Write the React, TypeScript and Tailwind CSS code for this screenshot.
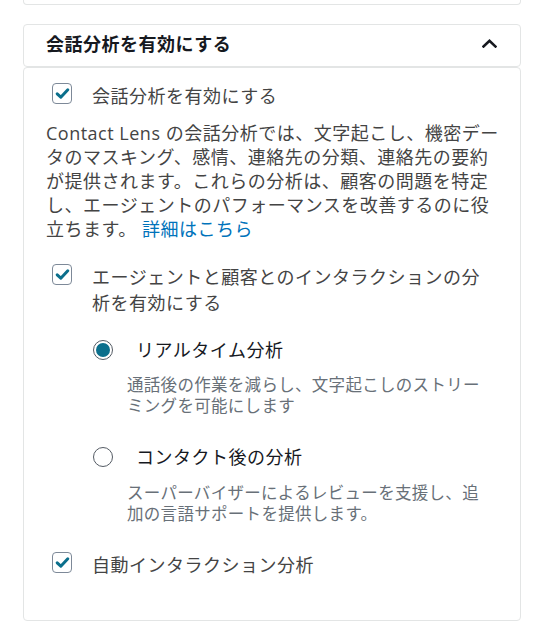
import React from "react";

const FONT = '"Open Sans", "Noto Sans CJK JP", sans-serif';

function Check() {
  return (
    <span className="flex h-[21px] w-[20px] shrink-0 items-center justify-center rounded-[4px] border border-[#7d8998] bg-white">
      <svg width="15" height="15" viewBox="0 0 15 15" fill="none">
        <path d="M2.2 7.8 L5.8 11.2 L12.8 3.8" stroke="#0b6f8c" strokeWidth="3" strokeLinecap="round" strokeLinejoin="round" />
      </svg>
    </span>
  );
}

function Radio({ on }: { on?: boolean }) {
  return (
    <span className="flex h-[20px] w-[20px] shrink-0 items-center justify-center rounded-full border border-[#545b64] bg-white">
      {on && <span className="h-[14px] w-[14px] rounded-full bg-[#0b6f8c]" />}
    </span>
  );
}

export default function App() {
  return (
    <div className="min-h-screen bg-white" style={{ fontFamily: FONT }}>
      <div className="ml-[23px] mr-[19px]">
        <div className="h-[5px] rounded-b-[4px] border-x border-b border-[#e3e5e5]" />
        <div className="mt-[19px] flex h-[43px] items-center justify-between rounded-[4px] border border-[#e3e5e5] pl-[22px] pr-[23px]">
          <span className="mb-[3px] text-[18px] font-bold leading-[26px] tracking-[0.5px] text-[#16191f]">会話分析を有効にする</span>
          <svg width="15" height="9" viewBox="0 0 15 9" fill="none" className="mb-[5px]">
            <path d="M1.5 7.5 L7.5 1.8 L13.5 7.5" stroke="#16191f" strokeWidth="2.6" strokeLinecap="square" />
          </svg>
        </div>
        <div className="rounded-[4px] border border-[#e3e5e5] pb-[42px] pl-[22px] pr-[18px] pt-[15px] text-[18px] tracking-[0.5px]">
          <div className="flex items-start gap-[20px] pl-[6px] pr-[9px]">
            <Check />
            <span className="leading-[26px] text-[#444]">会話分析を有効にする</span>
          </div>
          <p className="mt-[12px] leading-[24px] text-[#444]">
            Contact Lens の会話分析では、文字起こし、機密データのマスキング、感情、連絡先の分類、連絡先の要約が提供されます。これらの分析は、顧客の問題を特定し、エージェントのパフォーマンスを改善するのに役立ちます。 <span className="text-[#0073bb]">詳細はこちら</span>
          </p>
          <div className="pr-[9px]">
            <div className="mt-[23px] flex items-start gap-[20px] pl-[6px]">
              <Check />
              <span className="leading-[26px] text-[#444]">エージェントと顧客とのインタラクションの分析を有効にする</span>
            </div>
            <div className="mt-[21px] flex items-start gap-[23px] pl-[47px]">
              <span className="mt-[3px]"><Radio on /></span>
              <span className="leading-[26px] text-[#16191f]">リアルタイム分析</span>
            </div>
            <p className="ml-[81px] mt-[12px] text-[16.5px] leading-[20.5px] tracking-[0.3px] text-[#687078]">
              通話後の作業を減らし、文字起こしのストリーミングを可能にします
            </p>
            <div className="mt-[28px] flex items-start gap-[23px] pl-[47px]">
              <span className="mt-[3px]"><Radio /></span>
              <span className="leading-[26px] text-[#16191f]">コンタクト後の分析</span>
            </div>
            <p className="ml-[81px] mt-[13px] text-[16.5px] leading-[20.5px] tracking-[0.3px] text-[#687078]">
              スーパーバイザーによるレビューを支援し、追加の言語サポートを提供します。
            </p>
            <div className="mt-[28px] flex items-start gap-[20px] pl-[6px]">
              <Check />
              <span className="leading-[26px] text-[#444]">自動インタラクション分析</span>
            </div>
          </div>
        </div>
      </div>
    </div>
  );
}
